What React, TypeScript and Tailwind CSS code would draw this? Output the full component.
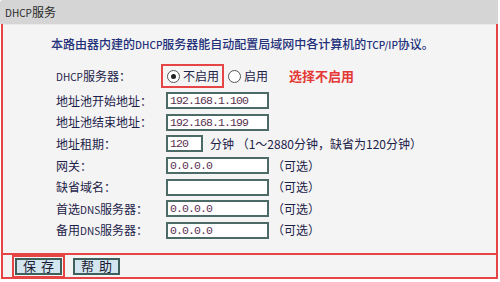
import React from "react";

const cjk = "font-['Noto_Sans_CJK_SC',sans-serif]";

const Latin = ({ children }: { children: React.ReactNode }) => (
  <span className="text-[10px]">{children}</span>
);

const Field = ({ value = "", w = "w-[103px]" }: { value?: string; w?: string }) => (
  <div
    className={`${w} h-[17px] border-2 border-[#4d6b66] bg-white flex items-center pl-[2px] font-['Liberation_Mono',monospace] text-[11.5px] tracking-[-0.9px] text-[#5a3050]`}
  >
    {value}
  </div>
);

const Row = ({ label, children }: { label: React.ReactNode; children: React.ReactNode }) => (
  <div className="h-[21.6px] flex items-center">
    <div className="w-[110px] shrink-0">{label}</div>
    <div className="flex items-center">{children}</div>
  </div>
);

const Optional = () => <span className="ml-[3px]">（可选）</span>;

const Radio = ({ checked }: { checked?: boolean }) => (
  <span className="w-[13px] h-[13px] rounded-full border border-[#555] bg-white flex items-center justify-center shrink-0">
    {checked && <span className="w-[5px] h-[5px] rounded-full bg-[#222]" />}
  </span>
);

const Button = ({ children }: { children: React.ReactNode }) => (
  <div className="w-[47px] h-[17px] border-2 border-[#3f5f5a] bg-[#d3e5ef] flex items-center justify-center text-[13px] text-[#1a1a30] tracking-[5px] pl-[5px]">
    {children}
  </div>
);

export default function App() {
  return (
    <div className={`w-[500px] h-[282px] bg-white ${cjk} text-[12px] text-[#1c2148]`}>
      <div className="w-[498px] h-[24px] bg-[#d5d5d5] rounded-tl-[3px] flex items-center pl-[5px] text-[#2a2a2a]">
        <Latin>DHCP</Latin>服务
      </div>
      <div className="ml-px w-[497px] border-x-2 border-b-2 border-[#e64545] bg-[#f4f4f4]">
        <div className="border-t border-[#e9e9e9] pl-[48px] pr-3 pt-[11px] pb-[12px]">
          <div className="leading-4 font-medium text-[#23307a]">
            本路由器内建的<Latin>DHCP</Latin>服务器能自动配置局域网中各计算机的<Latin>TCP/IP</Latin>协议。
          </div>
          <div className="pl-[5px] mt-[11px]">
            <div className="h-[24px] flex items-center">
              <div className="w-[105px] shrink-0">
                <Latin>DHCP</Latin>服务器：
              </div>
              <div className="h-[24px] w-[63px] border-2 border-[#e64545] flex items-center gap-[3px] pl-[4px]">
                <Radio checked />
                <span>不启用</span>
              </div>
              <div className="flex items-center gap-[3px] ml-[4px]">
                <Radio />
                <span>启用</span>
              </div>
              <span className="ml-[21px] text-[13px] font-bold text-[#e53935]">选择不启用</span>
            </div>
            <div className="mt-[2px]">
              <Row label="地址池开始地址：">
                <Field value="192.168.1.100" />
              </Row>
              <Row label="地址池结束地址：">
                <Field value="192.168.1.199" />
              </Row>
              <Row label="地址租期：">
                <Field value="120" w="w-[37px]" />
                <span className="ml-[7px]">分钟 （1～2880分钟，缺省为120分钟）</span>
              </Row>
              <Row label="网关：">
                <Field value="0.0.0.0" />
                <Optional />
              </Row>
              <Row label="缺省域名：">
                <Field />
                <Optional />
              </Row>
              <Row
                label={
                  <>
                    首选<Latin>DNS</Latin>服务器：
                  </>
                }
              >
                <Field value="0.0.0.0" />
                <Optional />
              </Row>
              <Row
                label={
                  <>
                    备用<Latin>DNS</Latin>服务器：
                  </>
                }
              >
                <Field value="0.0.0.0" />
                <Optional />
              </Row>
            </div>
          </div>
        </div>
        <div className="border-t-2 border-[#e64545] h-[24px] flex items-center pl-[9px] gap-[8px]">
          <div className="border-2 border-[#e64545] p-px">
            <Button>保存</Button>
          </div>
          <Button>帮助</Button>
        </div>
      </div>
    </div>
  );
}
